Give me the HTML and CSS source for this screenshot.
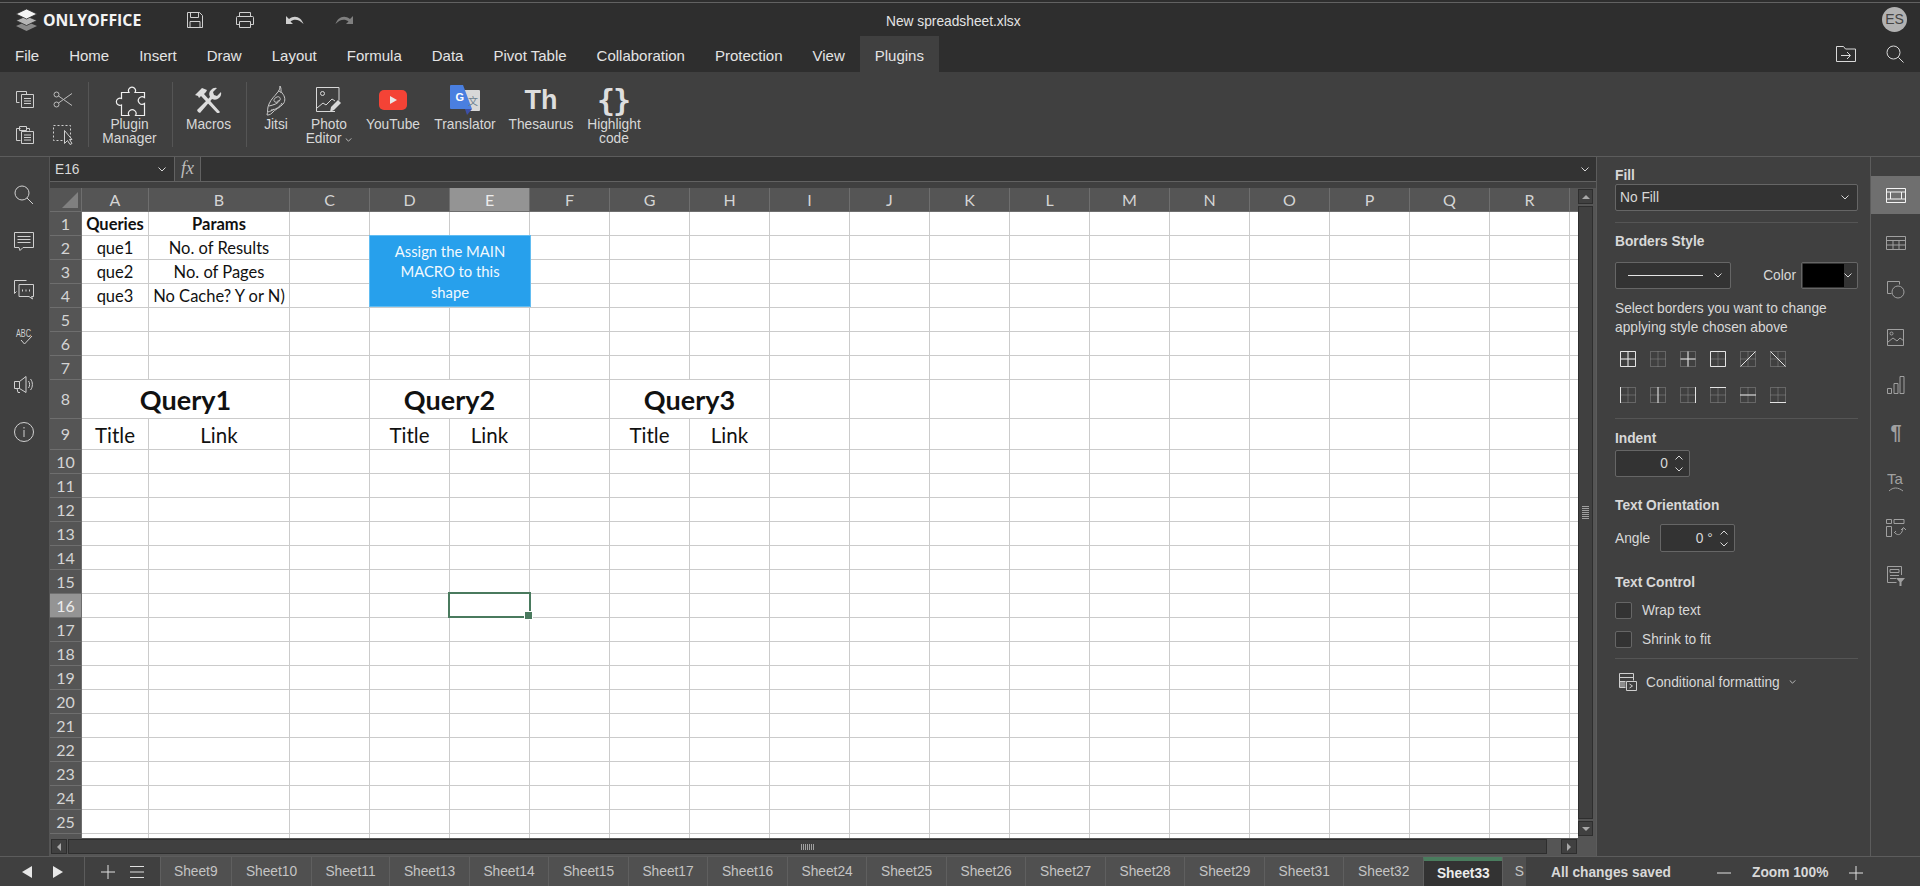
FILE: index.html
```html
<!DOCTYPE html>
<html lang="en">

<head>
  <meta charset="UTF-8">
  <meta name="viewport" content="width=device-width, initial-scale=1.0">
  <title>New spreadsheet.xlsx</title>
  <link rel="stylesheet" href="styles.css">
</head>

<body>
<svg class="defs" width="0" height="0">
  <symbol id="dots" viewBox="0 0 16 16">
    <path d="M.5 .5h15v15H.5zM8 .5v15M.5 8h15" fill="none" stroke="#8c8c8c" stroke-dasharray="1 1"/>
  </symbol>
  <symbol id="chev" viewBox="0 0 8 5">
    <path d="M.5 .5L4 4 7.500 .5" fill="none" stroke="#d8d8d8"/>
  </symbol>
</svg>

<header class="title-row">
  <div class="brand">
    <svg width="23" height="23" viewBox="0 0 23 23">
      <path d="M11.500 13.500L1 18l10.500 5L22 18z" fill="#8a8a8a"/>
      <path d="M11.500 8L1 12.500 11.500 17.500 22 12.500z" fill="#b5b5b5" stroke="#2e2e2e" stroke-width=".8"/>
      <path d="M11.500 1L1 6l10.500 5L22 6z" fill="#f4f4f4" stroke="#2e2e2e" stroke-width=".8"/>
    </svg>
    <span class="brand-name">ONLYOFFICE</span>
  </div>
  <div class="quick-actions">
    <svg width="18" height="18" viewBox="0 0 18 18" fill="none" stroke="#cfcfcf"><path d="M1.500 1.500h12l3 3v12h-15zM4.500 1.500v5h8v-5M4 16.500v-6h10v6"/></svg>
    <svg width="20" height="18" viewBox="0 0 20 18" fill="none" stroke="#cfcfcf"><path d="M4.500 6V1.500h11V6M4.500 13.500h-3V6.500a1 1 0 0 1 1-1h15a1 1 0 0 1 1 1v7h-3M4.500 10.500h11v6h-11z"/></svg>
    <svg width="18" height="12" viewBox="0 0 18 12"><path d="M0 2v8h7L4.500 7.500C8 4.500 13 5 17.500 10 15.500 3.500 9 0 3 5z" fill="#cfcfcf"/></svg>
    <svg class="dim" width="18" height="12" viewBox="0 0 18 12"><path d="M18 2v8h-7l2.500-2.500C10 4.500 5 5 .5 10 2.500 3.500 9 0 15 5z" fill="#7f7f7f"/></svg>
  </div>
  <div class="doc-title">New spreadsheet.xlsx</div>
  <div class="avatar">ES</div>
</header>

<nav class="menu-row">
  <a class="menu-tab">File</a>
  <a class="menu-tab">Home</a>
  <a class="menu-tab">Insert</a>
  <a class="menu-tab">Draw</a>
  <a class="menu-tab">Layout</a>
  <a class="menu-tab">Formula</a>
  <a class="menu-tab">Data</a>
  <a class="menu-tab">Pivot Table</a>
  <a class="menu-tab">Collaboration</a>
  <a class="menu-tab">Protection</a>
  <a class="menu-tab">View</a>
  <a class="menu-tab active">Plugins</a>
  <div class="menu-tools">
    <svg width="20" height="16" viewBox="0 0 20 16" fill="none" stroke="#d8d8d8"><path d="M.5 15.500V.5h7l2 2.500h10v12.500zM5 9.500h9M11 6l3.500 3.500L11 13"/></svg>
    <svg width="18" height="18" viewBox="0 0 18 18" fill="none" stroke="#d8d8d8"><circle cx="7.500" cy="7.500" r="6.500"/><path d="M12.500 12.500l5 5"/></svg>
  </div>
</nav>

<section class="toolbar">
  <div class="clip-group">
    <svg width="18" height="17" viewBox="0 0 18 17" fill="none" stroke="#cfcfcf"><path d="M3.500 11.500h-3V.5h10v3M5.500 3.500h12v13h-12zM8 7.500h7M8 10h7M8 12.500h7"/></svg>
    <svg width="20" height="17" viewBox="0 0 20 17" fill="none" stroke="#bdbdbd"><circle cx="3.500" cy="3.500" r="2.500"/><circle cx="3.500" cy="13.500" r="2.500"/><path d="M5.500 5L19 14.500M5.500 12L19 2.500"/></svg>
    <svg width="18" height="18" viewBox="0 0 18 18" fill="none" stroke="#cfcfcf"><path d="M4.500 14.500h-4v-12h4M3.500 .5h7v4h-7zM10.500 2.500h3v2M5.500 5.500h12v12h-12zM8 9h7M8 11.500h7M8 14h7"/></svg>
    <svg width="20" height="20" viewBox="0 0 20 20" fill="none" stroke="#cfcfcf"><path d="M.5 .5h17v15H.5z" stroke-dasharray="2 2"/><path d="M11.500 5.500v13l3-3 2.500 4 2-1-2.500-4h2.500z" fill="#404040"/></svg>
  </div>
  <i class="tool-sep"></i>
  <div class="tool-item tool-plugin">
    <span class="tool-icon">
      <svg width="32" height="31" viewBox="0 0 32 31" fill="none" stroke="#f0f0f0" stroke-width="1.200"><path d="M7.500 7.500H15A3.500 3.500 0 1 1 21 7.500H30.500V12.500A3.800 3.800 0 1 0 30.500 18.500V30.500H21.500A3.800 3.800 0 1 0 15 30.500H7.500V20A3.600 3.600 0 1 1 7.500 13.500z"/></svg>
    </span>
    <span class="tool-label">Plugin<br>Manager</span>
  </div>
  <i class="tool-sep"></i>
  <div class="tool-item tool-macros">
    <span class="tool-icon">
      <svg width="28" height="26" viewBox="0 0 28 26"><path d="M25 25L9 7l2-2 1-2-5-2-7 7 3 1 1 2 2-2 17 18z" fill="#dcdcdc"/><path d="M3 25l-1-2L15 10a6 6 0 0 1 1-7 6 6 0 0 1 6-2l-4 4 1 3 3 1 4-4a6 6 0 0 1-2 6 6 6 0 0 1-7 1L5 26z" fill="#dcdcdc"/></svg>
    </span>
    <span class="tool-label">Macros</span>
  </div>
  <i class="tool-sep"></i>
  <div class="plugin-list">
    <div class="tool-item">
      <span class="tool-icon">
        <svg width="22" height="31" viewBox="0 0 22 31" fill="none" stroke="#c8c8c8"><path d="M15 1c2 3 0 5 2 7 3 3 4 8 1 11-3 4-8 5-11 9-2 2-4 2-5 2 1-3 0-7 2-11 2-5 6-8 8-11 2-2 3-4 3-7z"/><path d="M4 21c4-1 9-2 11-6 1-2-1-4-3-3-3 1-4 4-2 5 2 1 4-1 3-2M6 25c4 0 9-3 11-7M13 6c2 1 3 0 3 2M3 27c2-1 4-1 6-3"/></svg>
      </span>
      <span class="tool-label">Jitsi</span>
    </div>
    <div class="tool-item">
      <span class="tool-icon">
        <svg width="26" height="26" viewBox="0 0 26 26" fill="none" stroke="#d8d8d8"><path d="M19 24.500H.5V.5h22.500v13"/><circle cx="6.500" cy="6.500" r="2"/><path d="M1 21l6-5 3 2 6-6 3 2"/><path d="M14 25l1-5 7-7 3 3-7 7z" fill="#d8d8d8" stroke="none"/></svg>
      </span>
      <span class="tool-label">Photo<br>Editor <svg class="label-chev" width="7" height="4"><use href="#chev"/></svg></span>
    </div>
    <div class="tool-item">
      <span class="tool-icon">
        <svg width="28" height="20" viewBox="0 0 28 20"><rect width="28" height="20" rx="5" fill="#f44336"/><path d="M11 6l7 4-7 4z" fill="#e8e8e8"/></svg>
      </span>
      <span class="tool-label">YouTube</span>
    </div>
    <div class="tool-item">
      <span class="tool-icon">
        <svg width="30" height="30" viewBox="0 0 30 30">
          <path d="M12 5h17a1 1 0 0 1 1 1v19a1 1 0 0 1-1 1H17z" fill="#d8d8d8"/>
          <path d="M1 0h12l9 24H1a1 1 0 0 1-1-1V1a1 1 0 0 1 1-1z" fill="#4a7fe0"/>
          <path d="M15 24h7l-5 6z" fill="#3c4fa8"/>
          <text class="translate-g" x="5.500" y="15.500">G</text>
          <text class="translate-a" x="18" y="20">文</text>
        </svg>
      </span>
      <span class="tool-label">Translator</span>
    </div>
    <div class="tool-item">
      <span class="tool-icon tool-text tool-th">Th</span>
      <span class="tool-label">Thesaurus</span>
    </div>
    <div class="tool-item">
      <span class="tool-icon tool-text tool-braces">{ }</span>
      <span class="tool-label">Highlight<br>code</span>
    </div>
  </div>
</section>

<main class="workspace">
  <aside class="left-rail">
    <svg width="20" height="20" viewBox="0 0 20 20" fill="none" stroke="#d0d0d0"><circle cx="8" cy="8" r="7"/><path d="M13 13l6 6"/></svg>
    <svg width="20" height="20" viewBox="0 0 20 20" fill="none" stroke="#d0d0d0"><path d="M.5 .5h19v15H9l-3 3-1-3H.5zM3.500 4.500h13M3.500 7.500h13M3.500 10.500h13"/></svg>
    <svg width="20" height="20" viewBox="0 0 20 20" fill="none" stroke="#d0d0d0"><path d="M12.500 .5H.5v13l2-2M5 4.500h14.500v12h-2l1 2.500-3.500-2.500H5z"/><path d="M8 10.500h1M11.500 10.500h1M15 10.500h1" stroke-width="2"/></svg>
    <svg width="20" height="20" viewBox="0 0 20 20" fill="none" stroke="#d0d0d0"><text class="abc-text" x="2" y="10" textLength="15" lengthAdjust="spacingAndGlyphs">ABC</text><path d="M7 13l3.500 4L18 9"/></svg>
    <svg width="20" height="20" viewBox="0 0 20 20" fill="none" stroke="#d0d0d0"><path d="M.5 6.500h5L12 1.500v16l-6.500-4h-5zM5.500 6.500v7M3 13.500l1 4h2M14.500 6c1.500 2 1.500 5 0 7M16.500 4c2.500 3 2.500 8 0 11"/></svg>
    <svg width="20" height="20" viewBox="0 0 20 20" fill="none" stroke="#d0d0d0"><circle cx="10" cy="10" r="9.500"/><path d="M10 8v7M10 5v1.500"/></svg>
  </aside>

  <div class="center">
    <div class="formula-bar">
      <div class="name-box">E16 <svg width="8" height="5"><use href="#chev"/></svg></div>
      <div class="fx-box">fx</div>
      <div class="formula-input"><svg width="8" height="5"><use href="#chev"/></svg></div>
    </div>

    <div class="sheet-area">
      <div class="sheet-view">
        <table class="sheet">
          <colgroup>
            <col class="col-head"><col class="col-a"><col class="col-b">
            <col span="17" class="col-std">
          </colgroup>
          <thead>
            <tr>
              <th class="corner"><i class="corner-mark"></i></th>
              <th>A</th><th>B</th><th>C</th><th>D</th><th class="picked">E</th><th>F</th><th>G</th><th>H</th><th>I</th><th>J</th><th>K</th><th>L</th><th>M</th><th>N</th><th>O</th><th>P</th><th>Q</th><th>R</th><th></th>
            </tr>
          </thead>
          <tbody>
            <tr><th>1</th><td class="strong">Queries</td><td class="strong">Params</td><td></td><td></td><td></td><td></td><td></td><td></td><td></td><td></td><td></td><td></td><td></td><td></td><td></td><td></td><td></td><td></td><td></td></tr>
            <tr><th>2</th><td>que1</td><td>No. of Results</td><td></td><td></td><td></td><td></td><td></td><td></td><td></td><td></td><td></td><td></td><td></td><td></td><td></td><td></td><td></td><td></td><td></td></tr>
            <tr><th>3</th><td>que2</td><td>No. of Pages</td><td></td><td></td><td></td><td></td><td></td><td></td><td></td><td></td><td></td><td></td><td></td><td></td><td></td><td></td><td></td><td></td><td></td></tr>
            <tr><th>4</th><td>que3</td><td>No Cache? Y or N)</td><td></td><td></td><td></td><td></td><td></td><td></td><td></td><td></td><td></td><td></td><td></td><td></td><td></td><td></td><td></td><td></td><td></td></tr>
            <tr><th>5</th><td></td><td></td><td></td><td></td><td></td><td></td><td></td><td></td><td></td><td></td><td></td><td></td><td></td><td></td><td></td><td></td><td></td><td></td><td></td></tr>
            <tr><th>6</th><td></td><td></td><td></td><td></td><td></td><td></td><td></td><td></td><td></td><td></td><td></td><td></td><td></td><td></td><td></td><td></td><td></td><td></td><td></td></tr>
            <tr><th>7</th><td></td><td></td><td></td><td></td><td></td><td></td><td></td><td></td><td></td><td></td><td></td><td></td><td></td><td></td><td></td><td></td><td></td><td></td><td></td></tr>
            <tr class="row-query"><th>8</th><td colspan="2" class="query">Query1</td><td></td><td colspan="2" class="query">Query2</td><td></td><td colspan="2" class="query">Query3</td><td></td><td></td><td></td><td></td><td></td><td></td><td></td><td></td><td></td><td></td><td></td></tr>
            <tr class="row-fields"><th>9</th><td>Title</td><td>Link</td><td></td><td>Title</td><td>Link</td><td></td><td>Title</td><td>Link</td><td></td><td></td><td></td><td></td><td></td><td></td><td></td><td></td><td></td><td></td><td></td></tr>
            <tr><th>10</th><td></td><td></td><td></td><td></td><td></td><td></td><td></td><td></td><td></td><td></td><td></td><td></td><td></td><td></td><td></td><td></td><td></td><td></td><td></td></tr>
            <tr><th>11</th><td></td><td></td><td></td><td></td><td></td><td></td><td></td><td></td><td></td><td></td><td></td><td></td><td></td><td></td><td></td><td></td><td></td><td></td><td></td></tr>
            <tr><th>12</th><td></td><td></td><td></td><td></td><td></td><td></td><td></td><td></td><td></td><td></td><td></td><td></td><td></td><td></td><td></td><td></td><td></td><td></td><td></td></tr>
            <tr><th>13</th><td></td><td></td><td></td><td></td><td></td><td></td><td></td><td></td><td></td><td></td><td></td><td></td><td></td><td></td><td></td><td></td><td></td><td></td><td></td></tr>
            <tr><th>14</th><td></td><td></td><td></td><td></td><td></td><td></td><td></td><td></td><td></td><td></td><td></td><td></td><td></td><td></td><td></td><td></td><td></td><td></td><td></td></tr>
            <tr><th>15</th><td></td><td></td><td></td><td></td><td></td><td></td><td></td><td></td><td></td><td></td><td></td><td></td><td></td><td></td><td></td><td></td><td></td><td></td><td></td></tr>
            <tr><th class="picked">16</th><td></td><td></td><td></td><td></td><td></td><td></td><td></td><td></td><td></td><td></td><td></td><td></td><td></td><td></td><td></td><td></td><td></td><td></td><td></td></tr>
            <tr><th>17</th><td></td><td></td><td></td><td></td><td></td><td></td><td></td><td></td><td></td><td></td><td></td><td></td><td></td><td></td><td></td><td></td><td></td><td></td><td></td></tr>
            <tr><th>18</th><td></td><td></td><td></td><td></td><td></td><td></td><td></td><td></td><td></td><td></td><td></td><td></td><td></td><td></td><td></td><td></td><td></td><td></td><td></td></tr>
            <tr><th>19</th><td></td><td></td><td></td><td></td><td></td><td></td><td></td><td></td><td></td><td></td><td></td><td></td><td></td><td></td><td></td><td></td><td></td><td></td><td></td></tr>
            <tr><th>20</th><td></td><td></td><td></td><td></td><td></td><td></td><td></td><td></td><td></td><td></td><td></td><td></td><td></td><td></td><td></td><td></td><td></td><td></td><td></td></tr>
            <tr><th>21</th><td></td><td></td><td></td><td></td><td></td><td></td><td></td><td></td><td></td><td></td><td></td><td></td><td></td><td></td><td></td><td></td><td></td><td></td><td></td></tr>
            <tr><th>22</th><td></td><td></td><td></td><td></td><td></td><td></td><td></td><td></td><td></td><td></td><td></td><td></td><td></td><td></td><td></td><td></td><td></td><td></td><td></td></tr>
            <tr><th>23</th><td></td><td></td><td></td><td></td><td></td><td></td><td></td><td></td><td></td><td></td><td></td><td></td><td></td><td></td><td></td><td></td><td></td><td></td><td></td></tr>
            <tr><th>24</th><td></td><td></td><td></td><td></td><td></td><td></td><td></td><td></td><td></td><td></td><td></td><td></td><td></td><td></td><td></td><td></td><td></td><td></td><td></td></tr>
            <tr><th>25</th><td></td><td></td><td></td><td></td><td></td><td></td><td></td><td></td><td></td><td></td><td></td><td></td><td></td><td></td><td></td><td></td><td></td><td></td><td></td></tr>
            <tr class="row-cut"><th></th><td></td><td></td><td></td><td></td><td></td><td></td><td></td><td></td><td></td><td></td><td></td><td></td><td></td><td></td><td></td><td></td><td></td><td></td><td></td></tr>
          </tbody>
        </table>
        <div class="macro-shape">Assign the MAIN<br>MACRO to this<br>shape</div>
        <div class="cell-cursor"></div>
      </div>

      <div class="vscroll">
        <div class="scroll-btn"><i class="arrow-up"></i></div>
        <div class="scroll-track"><i class="grip-v"></i></div>
        <div class="scroll-btn"><i class="arrow-down"></i></div>
      </div>

      <div class="hscroll">
        <div class="scroll-btn"><i class="arrow-left"></i></div>
        <div class="scroll-track"><i class="grip-h"></i></div>
        <div class="scroll-btn scroll-btn-end"><i class="arrow-right"></i></div>
      </div>
    </div>
  </div>

  <aside class="panel">
    <div class="panel-label">Fill</div>
    <div class="select fill-select">No Fill <svg width="8" height="5"><use href="#chev"/></svg></div>
    <hr class="divider">

    <div class="panel-label borders-label">Borders Style</div>
    <div class="border-line-row">
      <div class="select line-select"><i class="line-sample"></i><svg width="8" height="5"><use href="#chev"/></svg></div>
      <span class="color-label">Color</span>
      <div class="select color-select"><i class="swatch"></i><svg width="8" height="5"><use href="#chev"/></svg></div>
    </div>
    <p class="help-text">Select borders you want to change applying style chosen above</p>

    <div class="border-grid">
      <svg class="bd" viewBox="0 0 16 16"><use href="#dots"/><path d="M.5 .5h15v15H.5zM8 .5v15M.5 8h15"/></svg>
      <svg class="bd" viewBox="0 0 16 16"><use href="#dots"/></svg>
      <svg class="bd" viewBox="0 0 16 16"><use href="#dots"/><path d="M8 .5v15M.5 8h15"/></svg>
      <svg class="bd" viewBox="0 0 16 16"><use href="#dots"/><path d="M.5 .5h15v15H.5z"/></svg>
      <svg class="bd" viewBox="0 0 16 16"><use href="#dots"/><path d="M.5 15.500l15-15"/></svg>
      <svg class="bd" viewBox="0 0 16 16"><use href="#dots"/><path d="M.5 .5l15 15"/></svg>
      <svg class="bd" viewBox="0 0 16 16"><use href="#dots"/><path d="M.5 0v16"/></svg>
      <svg class="bd" viewBox="0 0 16 16"><use href="#dots"/><path d="M8 0v16"/></svg>
      <svg class="bd" viewBox="0 0 16 16"><use href="#dots"/><path d="M15.500 0v16"/></svg>
      <svg class="bd" viewBox="0 0 16 16"><use href="#dots"/><path d="M0 .5h16"/></svg>
      <svg class="bd" viewBox="0 0 16 16"><use href="#dots"/><path d="M0 8h16"/></svg>
      <svg class="bd" viewBox="0 0 16 16"><use href="#dots"/><path d="M0 15.500h16"/></svg>
    </div>
    <hr class="divider grid-divider">

    <div class="panel-label">Indent</div>
    <div class="spin indent-spin">
      <span>0</span>
      <span class="spin-arrows"><svg class="flip" width="8" height="5"><use href="#chev"/></svg><svg width="8" height="5"><use href="#chev"/></svg></span>
    </div>

    <div class="panel-label section-label">Text Orientation</div>
    <div class="angle-row">
      <span>Angle</span>
      <div class="spin angle-spin">
        <span>0 °</span>
        <span class="spin-arrows"><svg class="flip" width="8" height="5"><use href="#chev"/></svg><svg width="8" height="5"><use href="#chev"/></svg></span>
      </div>
    </div>

    <div class="panel-label section-label control-label">Text Control</div>
    <label class="check-row first"><i class="check"></i>Wrap text</label>
    <label class="check-row"><i class="check"></i>Shrink to fit</label>
    <hr class="divider cond-divider">

    <div class="cond-format">
      <svg width="18" height="18" viewBox="0 0 18 18" fill="none" stroke="#cfcfcf"><path d="M6.500 14.500H.5V.5h14v7M.5 4.500h14M.5 8.500h6"/><path d="M1 9h5.500v5H1z" fill="#8c8c8c" stroke="none"/><path d="M7.500 8.500h10v9h-10zM10.500 11l3 2-3 2"/></svg>
      <span>Conditional formatting</span>
      <svg class="cond-chev" width="7" height="4"><use href="#chev"/></svg>
    </div>
  </aside>

  <aside class="right-rail">
    <div class="rail-item active"><svg width="20" height="15" viewBox="0 0 20 15" fill="none" stroke="#f4f4f4"><path d="M.5 .5h19v14H.5zM4.500 4h11v7h-11zM.5 4h4M15.500 4h4M.5 11h4M15.500 11h4"/></svg></div>
    <div class="rail-item"><svg width="20" height="14" viewBox="0 0 20 14" fill="none" stroke="#a0a0a0"><path d="M.5 .5h19v13H.5zM.5 4.500h19M.5 9h19M7 4.500v9M13 4.500v9"/></svg></div>
    <div class="rail-item"><svg width="18" height="18" viewBox="0 0 18 18" fill="none" stroke="#a0a0a0"><path d="M4.500 12.500h-4V.5h12v3"/><circle cx="11" cy="11" r="6" /></svg></div>
    <div class="rail-item"><svg width="18" height="18" viewBox="0 0 18 18" fill="none" stroke="#a0a0a0"><path d="M.5 .5h16v16H.5zM1 13l5-4 4 3 3-3 4 3"/><circle cx="4.500" cy="4.500" r="1.500"/></svg></div>
    <div class="rail-item"><svg width="18" height="18" viewBox="0 0 18 18" fill="none" stroke="#a0a0a0"><path d="M.5 12.500h4v5h-4zM7 7.500h4v10H7zM13 .5h4v17h-4z"/></svg></div>
    <div class="rail-item"><span class="pilcrow">¶</span></div>
    <div class="rail-item"><svg width="18" height="22" viewBox="0 0 18 22" fill="none" stroke="#a0a0a0"><text class="art-text" x="0" y="14">Ta</text><path d="M2 21c4-4 9-4 14 0"/></svg></div>
    <div class="rail-item"><svg width="20" height="18" viewBox="0 0 20 18" fill="none" stroke="#a0a0a0"><path d="M.5 .5h5v4h-5zM8 .5h10v4H8zM.5 7.500h5v10h-5zM9 14c3 3 7 2 8-5M15 11l2.500-2.500L20 11M8 14l2-2"/></svg></div>
    <div class="rail-item"><svg width="18" height="20" viewBox="0 0 18 20" fill="none" stroke="#a0a0a0"><path d="M14.500 9V.5H.5v16h9M3 3.500h9v3H3zM3 9.500h9M3 12.500h6"/><path d="M9 12h9l-3.500 4v4h-2v-4z" fill="#a0a0a0" stroke="none"/></svg></div>
  </aside>
</main>

<footer class="status-bar">
  <div class="sheet-nav">
    <i class="nav-left"></i>
    <i class="nav-right"></i>
  </div>
  <div class="sheet-add">
    <svg width="14" height="14" viewBox="0 0 14 14" stroke="#e0e0e0"><path d="M7 0v14M0 7h14"/></svg>
    <svg width="14" height="14" viewBox="0 0 14 14" stroke="#e0e0e0"><path d="M0 1.500h14M0 7h14M0 12.500h14"/></svg>
  </div>
  <div class="sheet-tabs">
    <a class="sheet-tab">Sheet9</a>
    <a class="sheet-tab">Sheet10</a>
    <a class="sheet-tab">Sheet11</a>
    <a class="sheet-tab">Sheet13</a>
    <a class="sheet-tab">Sheet14</a>
    <a class="sheet-tab">Sheet15</a>
    <a class="sheet-tab">Sheet17</a>
    <a class="sheet-tab">Sheet16</a>
    <a class="sheet-tab">Sheet24</a>
    <a class="sheet-tab">Sheet25</a>
    <a class="sheet-tab">Sheet26</a>
    <a class="sheet-tab">Sheet27</a>
    <a class="sheet-tab">Sheet28</a>
    <a class="sheet-tab">Sheet29</a>
    <a class="sheet-tab">Sheet31</a>
    <a class="sheet-tab">Sheet32</a>
    <a class="sheet-tab active">Sheet33</a>
    <a class="sheet-tab cut">S</a>
  </div>
  <div class="status-right">
    <span class="saved">All changes saved</span>
    <svg class="zoom-minus" width="14" height="14" viewBox="0 0 14 14" stroke="#e0e0e0"><path d="M0 7h14"/></svg>
    <span class="zoom-value">Zoom 100%</span>
    <svg width="14" height="14" viewBox="0 0 14 14" stroke="#e0e0e0"><path d="M7 0v14M0 7h14"/></svg>
  </div>
</footer>
</body>

</html>
```

FILE: styles.css
```css
* {
  box-sizing: border-box;
}

body {
  display: flex;
  flex-direction: column;
  height: 100vh;
  margin: 0;
  overflow: hidden;
  background: #404040;
  color: #d8d8d8;
  font-family: 'Liberation Sans', Arial, sans-serif;
  font-size: 13.75px;
}

svg {
  display: block;
  flex: none;
}

.defs {
  position: absolute;
}

/* title row */
.title-row {
  display: grid;
  grid-template-columns: 886px auto 1fr;
  align-items: center;
  height: 34px;
  margin-top: 2px;
  border-top: 1px solid #626262;
  background: #2e2e2e;
  box-shadow: 0 -2px 0 #2e2e2e;
}

.brand {
  display: flex;
  align-items: center;
  gap: 5px;
  padding-left: 15px;
  grid-column: 1;
  grid-row: 1;
}

.brand-name {
  font-family: 'Open Sans', sans-serif;
  font-weight: 700;
  font-size: 15.800px;
  color: #f4f4f4;
}

.quick-actions {
  display: flex;
  align-items: center;
  gap: 31px;
  grid-column: 1;
  grid-row: 1;
  padding-left: 186px;
}

.doc-title {
  grid-column: 2;
  padding-top: 3px;
  color: #e4e4e4;
}

.avatar {
  grid-column: 3;
  justify-self: end;
  width: 25px;
  height: 25px;
  margin-right: 13px;
  border-radius: 50%;
  background: #b2b2b2;
  color: #444;
  font-size: 14px;
  line-height: 25px;
  text-align: center;
}

/* menu row */
.menu-row {
  display: flex;
  height: 36px;
  background: #2e2e2e;
  color: #e4e4e4;
  font-size: 15px;
}

.menu-tab {
  padding: 3px 15px 0;
  line-height: 33px;
}

.menu-tab.active {
  background: #404040;
}

.menu-tools {
  display: flex;
  align-items: center;
  gap: 30px;
  margin-left: auto;
  padding: 0 16px 0 0;
}

/* toolbar */
.toolbar {
  display: flex;
  height: 85px;
  padding-top: 10px;
  border-bottom: 1px solid #5c5c5c;
}

.clip-group {
  display: grid;
  grid-template-columns: 38px 38px;
  grid-auto-rows: 35px;
  place-items: center;
  align-content: start;
  width: 88px;
  padding: 0 6px;
}

.tool-sep {
  width: 1px;
  height: 65px;
  background: #555;
}

.tool-item {
  display: flex;
  flex-direction: column;
  align-items: center;
  text-align: center;
}

.tool-plugin {
  width: 83px;
  padding-right: 2px;
}

.tool-macros {
  width: 73px;
  padding-right: 2px;
}

.plugin-list {
  display: grid;
  grid-template-columns: 58px 48px 80px 64px 88px 58px;
}

.tool-icon {
  display: flex;
  align-items: center;
  justify-content: center;
  height: 36px;
}

.tool-label {
  line-height: 14px;
  white-space: nowrap;
  color: #d8d8d8;
}

.label-chev {
  display: inline-block;
  vertical-align: 1px;
}

.tool-text {
  color: #dedede;
  font-weight: 700;
}

.tool-th {
  font-size: 27px;
}

.tool-braces {
  font-family: 'DejaVu Sans Mono', monospace;
  font-size: 30px;
  letter-spacing: -10px;
  padding-right: 10px;
}

.translate-g {
  fill: #fff;
  font-size: 11px;
  font-weight: 700;
}

.translate-a {
  fill: #6b7f8f;
  font-family: 'Noto Sans CJK SC', sans-serif;
  font-size: 10px;
}

/* workspace */
.workspace {
  display: flex;
  flex: 1;
  min-height: 0;
}

.left-rail {
  display: flex;
  flex: 0 0 50px;
  flex-direction: column;
  gap: 27.600px;
  align-items: center;
  padding-top: 27.500px;
  padding-right: 2px;
  border-right: 1px solid #555;
}

.abc-text {
  fill: #d0d0d0;
  stroke: none;
  font-size: 11px;
}

.center {
  display: flex;
  flex: 0 0 1547px;
  flex-direction: column;
  min-width: 0;
  border-right: 1px solid #5c5c5c;
}

.formula-bar {
  display: flex;
  flex: none;
  height: 25px;
  margin-bottom: 6px;
  border-bottom: 1px solid #626262;
  background: #333;
}

.name-box {
  display: flex;
  align-items: center;
  justify-content: space-between;
  width: 125px;
  padding: 0 8px 0 5px;
  border-right: 1px solid #626262;
}

.fx-box {
  width: 26px;
  border-right: 1px solid #626262;
  background: #404040;
  color: #bdbdbd;
  font-family: 'Liberation Serif', serif;
  font-style: italic;
  font-size: 18px;
  line-height: 22px;
  text-align: center;
}

.formula-input {
  display: flex;
  flex: 1;
  align-items: center;
  justify-content: flex-end;
  padding-right: 7px;
}

.sheet-area {
  display: grid;
  flex: 1;
  grid-template-columns: 1fr 18px;
  grid-template-rows: 1fr 18px;
  min-height: 0;
  background: #555;
}

.sheet-view {
  position: relative;
  overflow: hidden;
}

.sheet {
  width: 1600px;
  border-collapse: separate;
  border-spacing: 0;
  table-layout: fixed;
  background: #fff;
  color: #111;
  font-family: Lato, 'Open Sans', sans-serif;
  font-size: 16.500px;
}

.col-head {
  width: 32px;
}

.col-a {
  width: 67px;
}

.col-b {
  width: 141px;
}

.col-std {
  width: 80px;
}

.sheet tr {
  height: 24px;
}

.sheet .row-query {
  height: 39px;
}

.sheet .row-fields {
  height: 31px;
}

.sheet th {
  height: 24px;
  padding: 0;
  border-right: 1px solid #6e6e6e;
  border-bottom: 1px solid #6e6e6e;
  background: #555;
  color: #d4d4d4;
  font-weight: 400;
  font-size: 16px;
  line-height: 18px;
}

.sheet .picked {
  background: #949494;
  color: #ececec;
}

.sheet td {
  overflow: hidden;
  padding: 1px 0 0;
  border-right: 1px solid #cbcbcb;
  border-bottom: 1px solid #cbcbcb;
  line-height: 18px;
  text-align: center;
  white-space: nowrap;
}

.sheet .strong {
  font-weight: 700;
}

.sheet .query {
  font-size: 27px;
  font-weight: 700;
  line-height: 32px;
}

.sheet .row-fields td {
  font-size: 20.500px;
  line-height: 24px;
}

.corner {
  position: relative;
}

.corner-mark {
  position: absolute;
  right: 3px;
  bottom: 3px;
  width: 0;
  height: 0;
  border-left: 16px solid transparent;
  border-bottom: 16px solid #808080;
}

.macro-shape {
  position: absolute;
  left: 319px;
  top: 47px;
  display: flex;
  align-items: center;
  justify-content: center;
  width: 162px;
  height: 72px;
  padding-top: 1px;
  border: 1px solid #62bdf2;
  background: #27a0ec;
  color: #f2f9fe;
  font-family: Lato, 'Open Sans', sans-serif;
  font-size: 14.800px;
  line-height: 20.500px;
  text-align: center;
}

.cell-cursor {
  position: absolute;
  left: 398px;
  top: 404px;
  width: 83px;
  height: 26px;
  border: 2px solid #4a7a5e;
}

.cell-cursor::after {
  content: "";
  position: absolute;
  right: -4px;
  bottom: -4px;
  width: 7px;
  height: 7px;
  border: 1px solid #fff;
  background: #4a7a5e;
}

/* scrollbars */
.vscroll {
  display: flex;
  flex-direction: column;
  grid-row: 1 / 3;
  grid-column: 2;
  gap: 2px;
  width: 15px;
  padding: 1px 0 20px;
}

.hscroll {
  display: flex;
  align-items: flex-start;
  grid-row: 2;
  grid-column: 1;
  gap: 1px;
  padding: 1px 1px 0;
}

.scroll-btn {
  display: flex;
  flex: none;
  align-items: center;
  justify-content: center;
  width: 15px;
  height: 15px;
  border: 1px solid #2e2e2e;
  background: #404040;
}

.hscroll .scroll-btn {
  width: 16px;
}

.hscroll .scroll-btn-end {
  margin-left: 13px;
}

.scroll-track {
  display: flex;
  flex: 1;
  align-items: center;
  justify-content: center;
  border: 1px solid #2e2e2e;
  background: #404040;
}

.hscroll .scroll-track {
  height: 15px;
}

.grip-h {
  width: 14px;
  height: 6px;
  background: repeating-linear-gradient(90deg, #a0a0a0 0 1px, transparent 1px 2px);
}

.grip-v {
  width: 7px;
  height: 14px;
  background: repeating-linear-gradient(180deg, #a0a0a0 0 1px, transparent 1px 2px);
}

.arrow-up,
.arrow-down,
.arrow-left,
.arrow-right {
  width: 0;
  height: 0;
  border: 4px solid transparent;
}

.arrow-up {
  border-top: 0;
  border-bottom: 4px solid #a8a8a8;
}

.arrow-down {
  border-bottom: 0;
  border-top: 4px solid #a8a8a8;
}

.arrow-left {
  border-left: 0;
  border-right: 4px solid #a8a8a8;
}

.arrow-right {
  border-right: 0;
  border-left: 4px solid #a8a8a8;
}

/* right panel */
.panel {
  flex: 0 0 274px;
  padding: 10px 12px 0 18px;
  border-right: 1px solid #5c5c5c;
}

.panel-label {
  margin-bottom: -2px;
  font-weight: 700;
  line-height: 18px;
}

.select {
  display: flex;
  align-items: center;
  justify-content: space-between;
  height: 27px;
  border: 1px solid #666;
  border-radius: 2px;
  background: #333;
}

.fill-select {
  margin-top: 1px;
  padding: 0 8px 0 4px;
}

.divider {
  height: 1px;
  margin: 11px 0 10px;
  border: 0;
  background: #555;
}

.border-line-row {
  display: flex;
  align-items: center;
  margin-top: 13px;
}

.line-select {
  width: 116px;
  padding: 0 8px 0 12px;
}

.line-sample {
  width: 75px;
  height: 1px;
  background: #e4e4e4;
}

.color-label {
  margin-left: auto;
  margin-right: 5px;
}

.color-select {
  width: 57px;
  padding: 1px 5px 1px 1px;
}

.swatch {
  width: 41px;
  height: 23px;
  background: #000;
}

.help-text {
  margin: 10px 0 0;
  line-height: 19px;
}

.border-grid {
  display: grid;
  grid-template-columns: repeat(6, 16px);
  gap: 20px 14px;
  margin: 14px 0 0 5px;
}

.bd {
  width: 16px;
  height: 16px;
  fill: none;
  stroke: #e4e4e4;
}

.grid-divider {
  margin: 15px 0 11px;
}

.spin {
  display: flex;
  align-items: center;
  justify-content: flex-end;
  gap: 7px;
  border: 1px solid #666;
  border-radius: 2px;
  background: #333;
  padding-right: 6px;
}

.indent-spin {
  width: 75px;
  height: 27px;
  margin-top: 4px;
}

.spin-arrows {
  display: flex;
  flex-direction: column;
  gap: 7px;
}

.flip {
  transform: rotate(180deg);
}

.section-label {
  margin-top: 20px;
}

.control-label {
  margin-top: 22px;
}

.angle-row {
  display: flex;
  align-items: center;
  gap: 9.500px;
  margin-top: 11px;
}

.angle-spin {
  width: 75px;
  height: 28px;
}

.check-row {
  display: flex;
  align-items: center;
  gap: 10px;
  height: 17px;
  margin-top: 12px;
}

.check {
  width: 17px;
  height: 17px;
  border: 1px solid #666;
  border-radius: 2px;
  background: #333;
}

.cond-divider {
  margin: 10px 0 14px;
}

.cond-format {
  display: flex;
  align-items: center;
  gap: 9px;
  padding-left: 4px;
}

.cond-chev {
  width: 7px;
  height: 4px;
}

/* right rail */
.right-rail {
  flex: 0 0 49px;
  padding-top: 19px;
}

.rail-item {
  display: flex;
  align-items: center;
  justify-content: center;
  height: 38px;
  margin-bottom: 9.600px;
  padding-left: 1px;
}

.rail-item.active {
  background: #6f6f6f;
}

.pilcrow {
  color: #a0a0a0;
  font-size: 20px;
  font-weight: 700;
}

.art-text {
  fill: #a0a0a0;
  stroke: none;
  font-size: 15px;
}

/* status bar */
.status-bar {
  display: flex;
  flex: none;
  height: 30px;
  border-top: 1px solid #5c5c5c;
}

.sheet-nav {
  display: flex;
  align-items: center;
  gap: 21px;
  width: 85px;
  padding: 0 0 0 22px;
  border-right: 1px solid #5c5c5c;
}

.nav-left,
.nav-right {
  width: 0;
  height: 0;
  border: 6px solid transparent;
  border-left-width: 0;
  border-right-width: 0;
}

.nav-left {
  border-right: 10px solid #e8e8e8;
}

.nav-right {
  border-left: 10px solid #e8e8e8;
}

.sheet-add {
  display: flex;
  align-items: center;
  gap: 15px;
  width: 75px;
  padding-left: 16px;
}

.sheet-tabs {
  display: flex;
  width: 1366px;
  overflow: hidden;
}

.sheet-tab {
  flex: none;
  height: 100%;
  padding: 0 13.650px;
  border-left: 1px solid #5f5f5f;
  background: #505050;
  color: #c4c4c4;
  line-height: 29px;
}

.sheet-tab:first-child {
  padding-left: 13px;
}

.sheet-tab.active {
  padding: 0 12px 0 13px;
  border-top: 4px solid #4a7c5e;
  background: #333;
  color: #ececec;
  font-weight: 700;
  line-height: 25px;
}

.sheet-tab.cut {
  padding: 0;
  width: 25px;
  padding-left: 12px;
}

.status-right {
  display: flex;
  flex: 1;
  align-items: center;
  padding: 2px 0 0 25px;
  font-weight: 700;
}

.zoom-minus {
  margin: 0 21px 0 46px;
}

.zoom-value {
  margin-right: 21px;
}
```
